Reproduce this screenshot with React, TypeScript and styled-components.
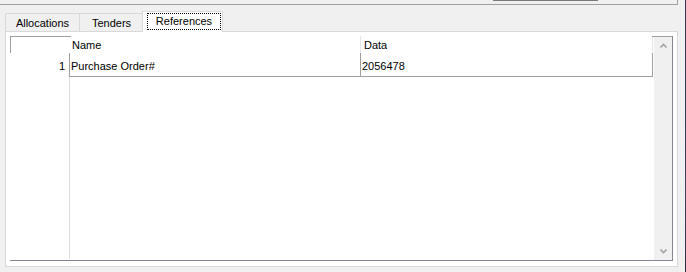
import React from "react";
import styled, { createGlobalStyle } from "styled-components";

const Global = createGlobalStyle`
  * { box-sizing: border-box; }
  html, body { margin: 0; padding: 0; background: #f0f0f0; }
  body { font-family: "Liberation Sans", Arial, sans-serif; font-size: 11px; color: #000; }
`;

const Root = styled.div`
  width: 686px;
  height: 272px;
  display: flex;
  background: #f0f0f0;
  overflow: hidden;
`;

const Main = styled.div`
  width: 685px;
  display: flex;
  flex-direction: column;
`;

const Edge = styled.div`
  width: 1px;
  background: linear-gradient(#3a3550, #2c3a5a 40%, #404060 70%, #2a3040);
`;

const TopBar = styled.div`
  width: 678px;
  height: 5px;
  border-bottom: 1px solid #a0a0a0;
  border-right: 1px solid #a0a0a0;
  padding-left: 493px;
`;

const TopSlider = styled.div`
  width: 105px;
  height: 1px;
  background: #7a7a7a;
`;

const TabStrip = styled.div`
  margin-top: 6px;
  padding-left: 5px;
  height: 20px;
  display: flex;
  align-items: flex-end;
`;

const Tab = styled.div<{ $first?: boolean; $selected?: boolean }>`
  height: ${(p) => (p.$selected ? "21px" : "18px")};
  margin-bottom: ${(p) => (p.$selected ? "-1px" : "0")};
  margin-left: ${(p) => (p.$selected ? "-2px" : "0")};
  position: ${(p) => (p.$selected ? "relative" : "static")};
  z-index: ${(p) => (p.$selected ? 1 : 0)};
  background: ${(p) => (p.$selected ? "#fff" : "#f0f0f0")};
  border-top: 1px solid #d9d9d9;
  border-right: 1px solid #d9d9d9;
  border-left: ${(p) => (p.$first || p.$selected ? "1px solid #d9d9d9" : "none")};
  display: flex;
  align-items: ${(p) => (p.$selected ? "flex-start" : "center")};
  justify-content: ${(p) => (p.$selected ? "flex-start" : "center")};
  padding: ${(p) => (p.$selected ? "1px 0 0 4px" : "1px 0 0 0")};
  line-height: 13px;
`;

const FocusLabel = styled.span`
  width: 74px;
  height: 17px;
  border: 1px dotted #000;
  display: flex;
  align-items: center;
  justify-content: center;
  padding-bottom: 1px;
`;

const Panel = styled.div`
  margin-left: 5px;
  width: 673px;
  height: 236px;
  border: 1px solid #d9d9d9;
  background: #fff;
  padding: 4px 4px 5px 4px;
`;

const Grid = styled.div`
  width: 663px;
  height: 225px;
  display: flex;
  border-bottom: 1px solid #828790;
  border-right: 1px solid #828790;
`;

const TableArea = styled.div`
  width: 643px;
  display: flex;
  flex-direction: column;
`;

const Row = styled.div<{ $h?: number }>`
  display: grid;
  grid-template-columns: 60px 291px 292px;
  height: ${(p) => (p.$h ? `${p.$h}px` : "auto")};
`;

const FillRow = styled(Row)`
  flex: 1;
  padding-bottom: 1px;
`;

const Corner = styled.div`
  border-top: 1px solid #a0a0a0;
  border-left: 1px solid #a0a0a0;
  margin-right: -1px;
`;

const HeadCell = styled.div<{ $pad: number }>`
  display: flex;
  align-items: center;
  padding-left: ${(p) => p.$pad}px;
  border-right: 1px solid #e5e5e5;
  padding-top: 1px;
`;

const RowHeadCell = styled.div`
  display: flex;
  align-items: center;
  justify-content: flex-end;
  padding-right: 4px;
  padding-top: 2px;
  border-right: 1px solid #a0a0a0;
`;

const Cell = styled.div<{ $pad: number }>`
  display: flex;
  align-items: center;
  padding-left: ${(p) => p.$pad}px;
  padding-top: 2px;
  border-right: 1px solid #a0a0a0;
  border-bottom: 1px solid #a0a0a0;
  white-space: nowrap;
`;

const FillHead = styled.div`
  border-right: 1px solid #dcdcdc;
`;

const ScrollBar = styled.div`
  width: 19px;
  margin-left: 1px;
  border-top: 1px solid #a0a0a0;
  background: #f0f0f0;
  display: flex;
  flex-direction: column;
  justify-content: space-between;
  position: relative;
`;

const ScrollTopCap = styled.div`
  position: absolute;
  left: -2px;
  top: -1px;
  width: 2px;
  height: 1px;
  background: #a0a0a0;
`;

const ArrowBtn = styled.div`
  height: 17px;
  display: flex;
  align-items: center;
  justify-content: center;
`;

const Chevron = ({ up }: { up?: boolean }) => (
  <svg width="7" height="5" viewBox="0 0 7 5">
    <path
      d={up ? "M0.5 4.5 L3.5 1.5 L6.5 4.5" : "M0.5 0.5 L3.5 3.5 L6.5 0.5"}
      fill="none"
      stroke="#a6a6a6"
      strokeWidth="1.6"
    />
  </svg>
);

export default function App() {
  return (
    <Root>
      <Global />
      <Main>
        <TopBar>
          <TopSlider />
        </TopBar>
        <TabStrip>
          <Tab $first style={{ width: 75 }}>Allocations</Tab>
          <Tab style={{ width: 64 }}>Tenders</Tab>
          <Tab $selected style={{ width: 81 }}>
            <FocusLabel>References</FocusLabel>
          </Tab>
        </TabStrip>
        <Panel>
          <Grid>
            <TableArea>
              <Row $h={17}>
                <Corner />
                <HeadCell $pad={2}>Name</HeadCell>
                <HeadCell $pad={3}>Data</HeadCell>
              </Row>
              <Row $h={24}>
                <RowHeadCell>1</RowHeadCell>
                <Cell $pad={1}>Purchase Order#</Cell>
                <Cell $pad={1}>2056478</Cell>
              </Row>
              <FillRow>
                <FillHead />
              </FillRow>
            </TableArea>
            <ScrollBar>
              <ScrollTopCap />
              <ArrowBtn>
                <Chevron up />
              </ArrowBtn>
              <ArrowBtn>
                <Chevron />
              </ArrowBtn>
            </ScrollBar>
          </Grid>
        </Panel>
      </Main>
      <Edge />
    </Root>
  );
}
